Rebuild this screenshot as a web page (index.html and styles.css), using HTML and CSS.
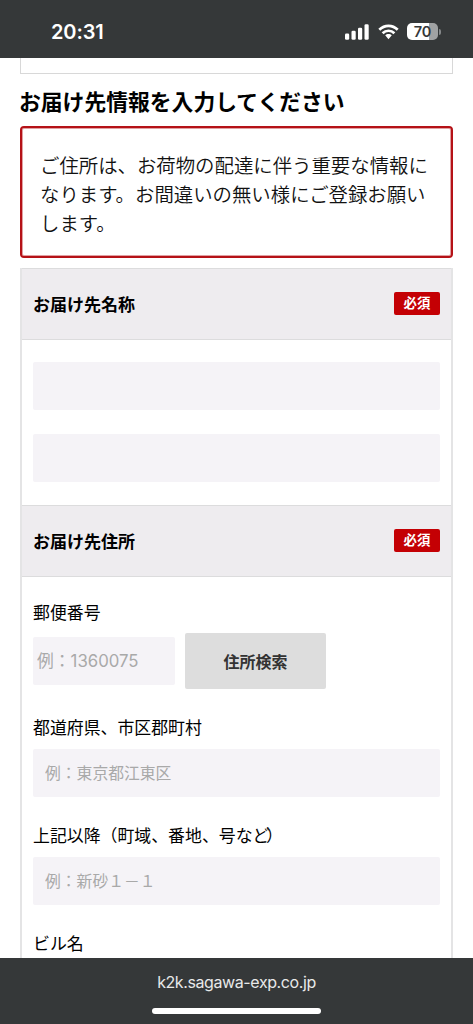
FILE: index.html
```html
<!DOCTYPE html>
<html lang="ja">
<head>
<meta charset="utf-8">
<title>お届け先情報</title>
<link rel="stylesheet" href="styles.css">
</head>
<body>
<div class="screen">
  <header class="status">
    <span class="time">20:31</span>
    <div class="indicators">
      <svg class="signal" width="24" height="16" viewBox="0 0 24 16" fill="#fff">
        <rect x="0" y="9.5" width="4.2" height="6.2" rx="1.3"/>
        <rect x="6.5" y="6.8" width="4.2" height="8.9" rx="1.3"/>
        <rect x="13" y="3.8" width="4.2" height="11.9" rx="1.3"/>
        <rect x="19.5" y="0.3" width="4.2" height="15.4" rx="1.3"/>
      </svg>
      <svg class="wifi" width="21" height="16" viewBox="0 0 21 16" fill="none" stroke="#fff" stroke-width="2.7">
        <path d="M1.3 5.8C6.5.6 14.5.6 19.7 5.8"/>
        <path d="M4.6 9.2c3.3-3.3 8.5-3.3 11.8 0"/>
        <path d="M10.5 10c-1.3 0-2.4.5-3.3 1.3l3.3 3.9 3.3-3.9c-.9-.8-2-1.3-3.3-1.3z" fill="#fff" stroke="none"/>
      </svg>
      <div class="battery"><span class="level">70</span><i class="cap"></i></div>
    </div>
  </header>
  <main class="page">
    <div class="previous"></div>
    <h1 class="title">お届け先情報を入力してください</h1>
    <div class="notice">ご住所は、お荷物の配達に伴う重要な情報に<br>なります。お間違いの無い様にご登録お願い<br>します。</div>
    <form class="form">
      <div class="section"><span>お届け先名称</span><span class="badge">必須</span></div>
      <div class="names">
        <input class="field" type="text">
        <input class="field" type="text">
      </div>
      <div class="section"><span>お届け先住所</span><span class="badge">必須</span></div>
      <div class="address">
        <label class="label">郵便番号</label>
        <div class="postal">
          <input class="field zip" type="text" placeholder="例：1360075">
          <button class="search" type="button">住所検索</button>
        </div>
        <label class="label">都道府県、市区郡町村</label>
        <input class="field spaced" type="text" placeholder="例：東京都江東区">
        <label class="label">上記以降（町域、番地、号な<span class="tight">ど</span>）</label>
        <input class="field spaced" type="text" placeholder="例：新砂１－１">
        <label class="label">ビル名</label>
      </div>
    </form>
  </main>
  <footer class="browser">
    <span class="url">k2k.sagawa-exp.co.jp</span>
    <i class="home"></i>
  </footer>
</div>
</body>
</html>
```
FILE: styles.css
```css
* { box-sizing: border-box; }
body {
  margin: 0;
  background: #fff;
  color: #000;
  font-family: "Noto Sans CJK JP", sans-serif;
}
.screen {
  display: flex;
  flex-direction: column;
  height: 1024px;
  overflow: hidden;
}
.status {
  flex: none;
  display: flex;
  justify-content: space-between;
  align-items: center;
  height: 58px;
  padding: 5px 32px 0 51px;
  background: #353839;
  color: #fff;
  font-family: Inter, sans-serif;
}
.time { font-size: 20px; font-weight: 600; line-height: 24px; letter-spacing: -0.1px; }
.indicators { display: flex; align-items: center; }
.signal { margin-right: 9px; }
.wifi { margin-right: 8px; }
.battery { display: flex; align-items: center; gap: 1px; }
.level {
  width: 31px;
  height: 17px;
  border-radius: 5px;
  background: linear-gradient(to right, #fff 70%, #a0a2a3 70%);
  color: #353839;
  font-size: 14.5px;
  font-weight: 600;
  line-height: 17px;
  text-align: center;
  letter-spacing: -0.2px;
}
.cap { width: 2px; height: 6px; border-radius: 0 2px 2px 0; background: #85888a; }
.page { flex: 1; min-height: 0; overflow: hidden; padding: 0 20px; }
.previous { height: 16px; border: 1px solid #d8d8d8; border-top: 0; }
.title {
  margin: 11px 0 9px -1px;
  font-size: 21.8px;
  font-weight: 700;
  line-height: 32px;
  white-space: nowrap;
}
.notice {
  height: 132px;
  padding: 22px 18px 0;
  border: 2px solid #b51217;
  border-radius: 4px;
  box-shadow: inset 0 0 0 1px rgba(181, 18, 23, 0.4);
  color: #111;
  font-size: 19.4px;
  font-weight: 350;
  line-height: 29.2px;
  white-space: nowrap;
}
.form { margin: 10px 0 0; border: 2px solid #e4e4e5; border-width: 0 2px; }
.section {
  display: flex;
  justify-content: space-between;
  align-items: center;
  height: 72px;
  padding: 0 11px 2px;
  border-top: 1px solid #dcdcdd;
  border-bottom: 1px solid #dcdcdd;
  background: #eeecef;
  font-size: 17px;
  font-weight: 700;
}
.badge {
  width: 46px;
  height: 23px;
  border-radius: 2px;
  background: #c40004;
  color: #fff;
  font-size: 13.4px;
  line-height: 21px;
  text-align: center;
}
.names { display: flex; flex-direction: column; gap: 24px; height: 165px; padding: 22px 11px 0; }
.field {
  display: block;
  width: 100%;
  height: 48px;
  margin: 0;
  padding: 0 12px 1px;
  border: 0;
  border-radius: 2px;
  background: #f5f3f7;
  font: 15.8px "Noto Sans CJK JP", sans-serif;
}
.field::placeholder { color: #a9a9a9; opacity: 1; }
.address { padding: 22px 11px 200px; }
.label { display: block; font-size: 16.9px; line-height: 26px; }
.tight { letter-spacing: -3.5px; }
.postal { display: flex; align-items: center; gap: 10px; margin: 8px 0 25px; }
.zip {
  width: 142px;
  padding: 0 4px;
  font-family: Inter, "Noto Sans CJK JP", sans-serif;
  font-size: 16.8px;
}
.search {
  width: 141px;
  height: 56px;
  padding: 0;
  border: 0;
  border-radius: 2px;
  background: #ddd;
  color: #333;
  font: 700 16px "Noto Sans CJK JP", sans-serif;
}
.spaced { margin: 9px 0 25px; }
.browser {
  flex: none;
  display: flex;
  flex-direction: column;
  align-items: center;
  height: 66px;
  padding-top: 13px;
  background: #353839;
  color: #e8e9e9;
  font-family: Inter, sans-serif;
}
.url { font-size: 16px; line-height: 22px; letter-spacing: -0.4px; }
.home { width: 169px; height: 6px; margin-top: 15px; border-radius: 3px; background: #fff; }
```
